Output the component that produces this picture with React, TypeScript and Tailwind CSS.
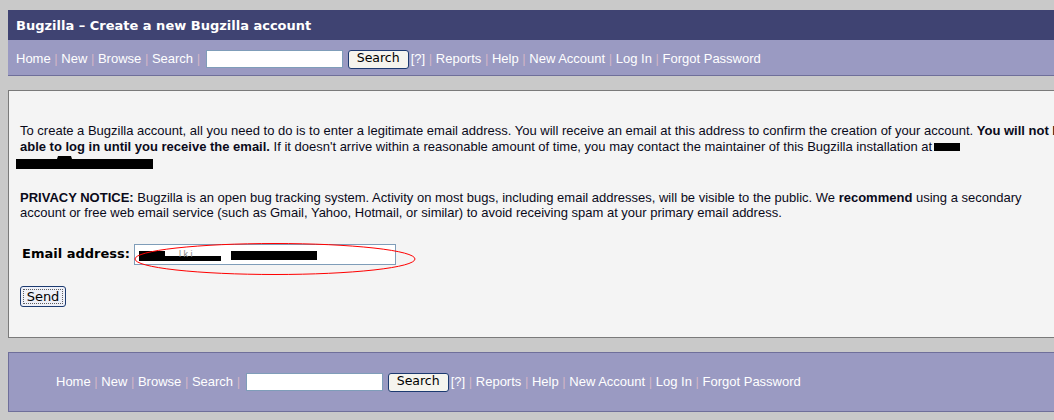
const linkFont = { fontFamily: '"Liberation Sans", Arial, sans-serif' };
const verdana = { fontFamily: '"DejaVu Sans", Verdana, sans-serif' };

function Sep() {
  return <span className="text-[#d2b6c6]"> | </span>;
}

function NavLinks({ inputW }: { inputW: string }) {
  const first = ['Home', 'New', 'Browse', 'Search'];
  const rest = ['Reports', 'Help', 'New Account', 'Log In', 'Forgot Password'];
  return (
    <div className="flex items-center whitespace-pre text-[13px] text-white" style={linkFont}>
      {first.map((l) => (
        <span key={l}>
          {l}
          <Sep />
        </span>
      ))}
      <div className={`${inputW} h-[18px] bg-white border border-[#7f9db9] ml-[2px]`} />
      <button
        className="ml-[5px] h-[19px] w-[61px] rounded-[3px] border border-[#1c3a70] bg-[#f5f4ee] text-[12.5px] text-black leading-none pb-[1px]"
        style={verdana}
      >
        Search
      </button>
      <span className="ml-[2px]">[?]</span>
      {rest.map((l) => (
        <span key={l}>
          <Sep />
          {l}
        </span>
      ))}
    </div>
  );
}

function Redact({ d, w, h }: { d: string; w: number; h: number }) {
  return (
    <svg width={w} height={h} className="inline-block align-middle">
      <path d={d} fill="#000" />
    </svg>
  );
}

export default function App() {
  return (
    <div className="w-[1054px] h-[420px] overflow-hidden bg-[#c9c9c9] pt-[10px] pl-[8px]">
      <div className="w-[1120px]">
        {/* header */}
        <div
          className="h-[30px] bg-[#3f4372] flex items-center pl-[8px] pt-[1px] text-white font-bold text-[13px]"
          style={verdana}
        >
          Bugzilla – Create a new Bugzilla account
        </div>
        <div className="h-[36px] bg-[#9a9ac2] border-b border-[#6f6f9a] flex items-center pl-[8px] pt-[3px]">
          <NavLinks inputW="w-[137px]" />
        </div>

        {/* content */}
        <div
          className="mt-[14px] h-[248px] bg-[#f4f4f4] border border-[#7a7a7a] pl-[11px] pt-[32px] text-[13px] leading-[15.5px] text-[#0a0a1a]"
          style={linkFont}
        >
          <div className="whitespace-nowrap">
            To create a Bugzilla account, all you need to do is to enter a legitimate email address. You will receive an
            email at this address to confirm the creation of your account. <b>You will not be</b>
            <br />
            <b>able to log in until you receive the email.</b> If it doesn't arrive within a reasonable amount of time,
            you may contact the maintainer of this Bugzilla installation at
            <Redact w={30} h={10} d="M2 1 L28 1 L28 9 L2 9 Z" />
            <br />
            <span className="-ml-[4px]">
              <Redact w={137} h={14} d="M0 3 L41 3 L42 0 L55 0 L56 3 L137 3 L137 13 L0 13 Z" />
            </span>
          </div>

          <div className="mt-[20px] whitespace-nowrap">
            <b>PRIVACY NOTICE:</b> Bugzilla is an open bug tracking system. Activity on most bugs, including email
            addresses, will be visible to the public. We <b>recommend</b> using a secondary
            <br />
            account or free web email service (such as Gmail, Yahoo, Hotmail, or similar) to avoid receiving spam at your
            primary email address.
          </div>

          <div className="mt-[23px] flex items-center">
            <span className="font-bold text-[13px] text-black pl-[2px]" style={verdana}>
              Email address:
            </span>
            <div className="ml-[4px] w-[262px] h-[21px] bg-white border border-[#7f9db9] relative">
              <svg width="200" height="14" className="absolute left-[4px] top-[4px]">
                <rect x="0" y="2" width="26" height="10" fill="#000" />
                <rect x="26" y="7" width="56" height="5" fill="#000" />
                <rect x="92" y="2" width="86" height="9" fill="#000" />
                <text x="40" y="8" fontSize="9" fill="#888" fontFamily="Liberation Sans">l k i</text>
              </svg>
              <svg width="284" height="34" className="absolute -left-[2px] -top-[3px] pointer-events-none">
                <ellipse cx="142" cy="17" rx="140" ry="15.5" fill="none" stroke="#ff0000" strokeWidth="1" />
              </svg>
            </div>
          </div>

          <button
            className="mt-[21px] h-[21px] w-[46px] rounded-[3px] border border-[#1c3a70] bg-[#eef0f8] text-[13px] text-black leading-none outline outline-1 outline-dotted outline-offset-[-4px] outline-black/60"
            style={verdana}
          >
            Send
          </button>
        </div>

        {/* footer */}
        <div className="mt-[14px] h-[60px] bg-[#9a9ac2] border border-[#6f6f9a] flex items-center pl-[47px]">
          <NavLinks inputW="w-[137px]" />
        </div>
      </div>
    </div>
  );
}
